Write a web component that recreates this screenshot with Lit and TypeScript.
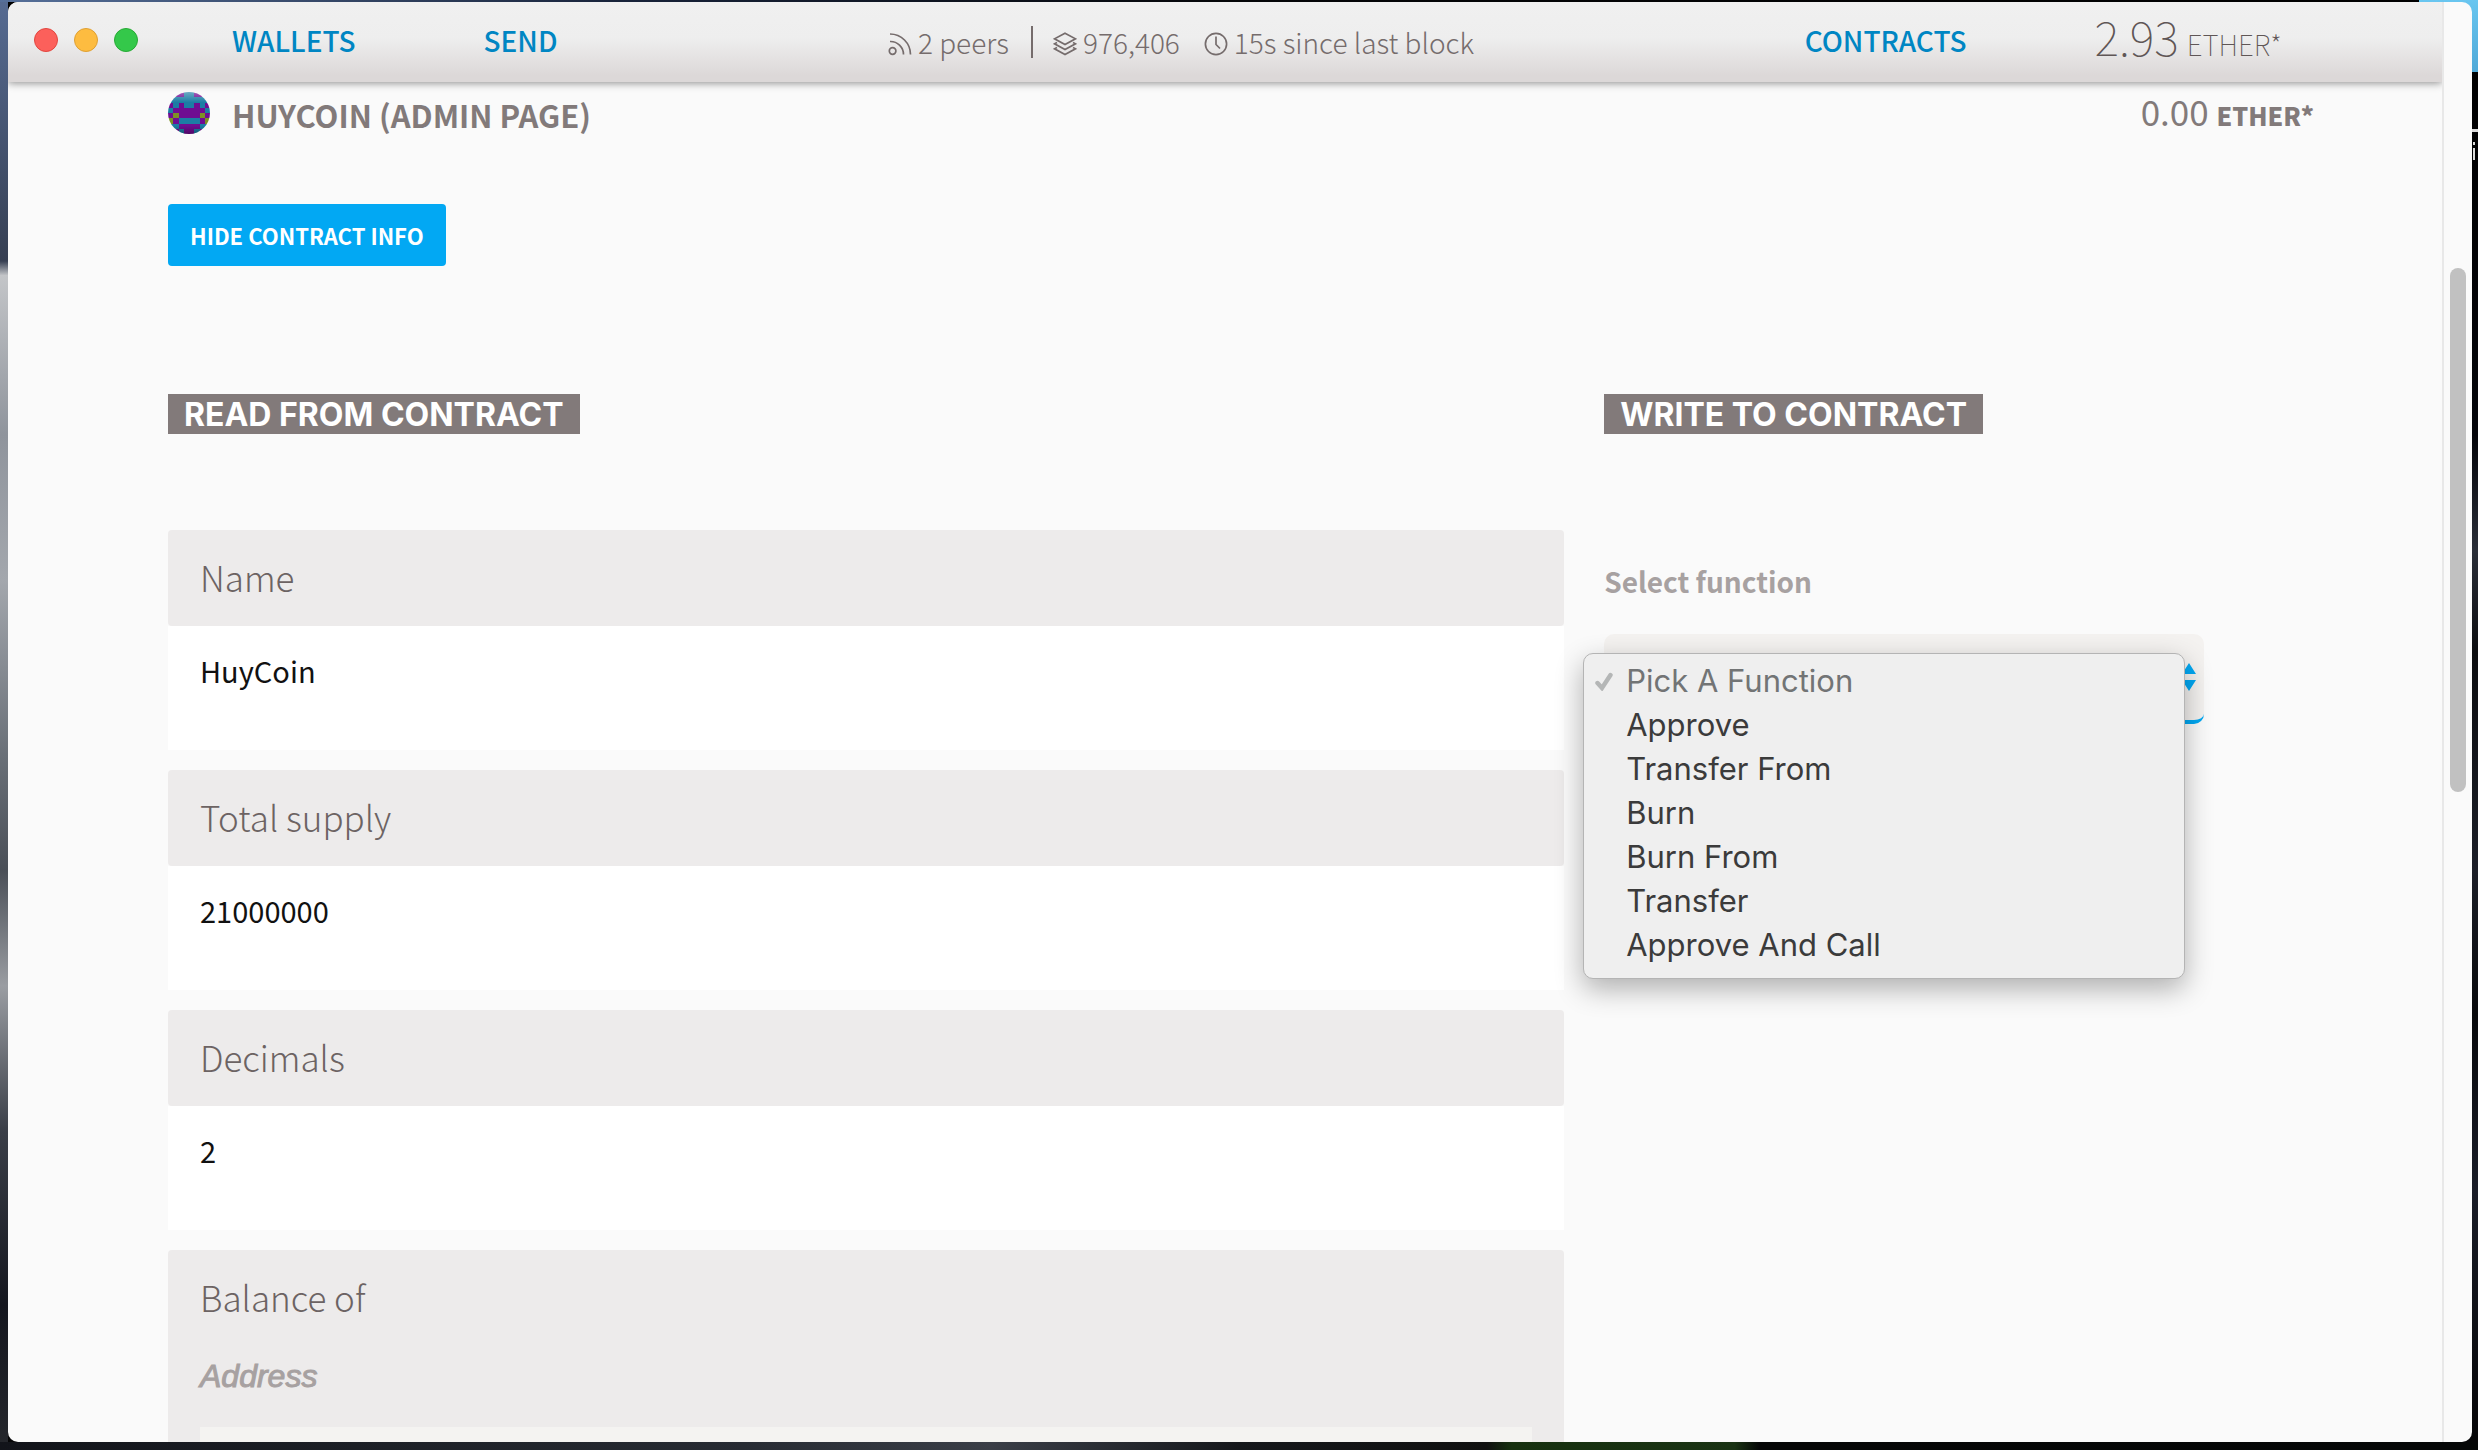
import { LitElement, html, css, svg } from "lit";
import { customElement } from "lit/decorators.js";

const identicon = [
  "01100110",
  "00000000",
  "10100101",
  "01111110",
  "12111121",
  "21000012",
  "00111100",
  "01011010",
];
const identiconColors = ["#1c7da4", "#6f0d92", "#7d9124"];

const fields = [
  { label: "Name", value: "HuyCoin" },
  { label: "Total supply", value: "21000000" },
  { label: "Decimals", value: "2" },
];

const functions = [
  "Pick A Function",
  "Approve",
  "Transfer From",
  "Burn",
  "Burn From",
  "Transfer",
  "Approve And Call",
];

@customElement("app-root")
export class AppRoot extends LitElement {
  static styles = css`
    :host {
      display: block;
      position: relative;
      box-sizing: border-box;
      height: 100vh;
      padding: 2px 6px 8px 8px;
      overflow: hidden;
      font-family: "Noto Sans CJK JP", "Noto Sans", sans-serif;
      color: #827a7a;
      background:
        linear-gradient(#69c6f0, #4fa9d8) right top / 59px 72px no-repeat,
        linear-gradient(90deg, #12141a 0%, #272b33 30%, #3a3e47 40%, #15171b 50%, #101010 60%, #16300f 61%, #1a3314 70%, #050606 71%, #050707 100%) left bottom / 100% 8px no-repeat,
        linear-gradient(90deg, #56709a 0%, #18233a 25%, #050608 50%, #000 100%) left top / 100% 2px no-repeat,
        linear-gradient(#566b92 0%, #363f52 18%, #c3c5c8 19%, #8f949c 30%, #a3a7ad 40%, #6a7078 52%, #4a4f57 60%, #9a9da2 68%, #3a3e47 78%, #15171f 90%, #25272c 100%) left top / 8px 100% no-repeat,
        linear-gradient(#000 0%, #04050a 30%, #2a2e38 38%, #0c0d10 45%, #1c1f28 60%, #08090c 70%, #1a1d28 82%, #050506 100%);
    }
    * {
      box-sizing: border-box;
    }
    h1,
    h2,
    h3,
    p,
    ul,
    dl,
    dd {
      margin: 0;
      padding: 0;
    }
    .window {
      display: flex;
      height: 100%;
      overflow: hidden;
      border-radius: 10px;
      background: #fafafa;
    }
    .page {
      flex: 1;
      min-width: 0;
      display: flex;
      flex-direction: column;
      overflow: hidden;
    }
    .scrollbar {
      flex: none;
      width: 30px;
      padding: 266px 6px 0;
      border-left: 2px solid #e8e8e8;
    }
    .thumb {
      width: 16px;
      height: 524px;
      border-radius: 8px;
      background: #c1c1c1;
    }
    .header {
      flex: none;
      display: flex;
      align-items: center;
      height: 80px;
      padding: 0 160px 0 26px;
      background: linear-gradient(#f0f0f0 0%, #eeeeee 45%, #dcd8d8 92%);
      box-shadow: 0 1px 8px rgba(0, 0, 0, 0.45);
      white-space: nowrap;
    }
    .lights {
      display: flex;
      gap: 16px;
      margin-right: 94px;
      padding-bottom: 4px;
    }
    .light {
      width: 24px;
      height: 24px;
      padding: 0;
      border: 1px solid #e2463f;
      border-radius: 50%;
      background: #fc605b;
    }
    .light.min {
      border-color: #dfa033;
      background: #fdbc40;
    }
    .light.max {
      border-color: #27aa35;
      background: #34c84a;
    }
    .nav {
      display: flex;
      gap: 128px;
      align-items: center;
      padding-bottom: 5px;
    }
    .link {
      font-size: 28px;
      line-height: 40px;
      font-weight: 500;
      color: #0086c3;
      text-decoration: none;
    }
    .status {
      flex: 1;
      display: flex;
      justify-content: center;
      align-items: center;
      font-size: 28px;
      line-height: 40px;
      font-weight: 300;
      color: #756c6c;
    }
    .icon {
      flex: none;
      width: 24px;
      height: 24px;
      margin: 4px 6px 0 0;
      fill: none;
      stroke: #756c6c;
      stroke-width: 1.7;
    }
    .peers {
      margin-right: 20px;
      padding-right: 22px;
      border-right: 2px solid #756c6c;
      line-height: 32px;
    }
    .stat {
      display: flex;
      align-items: center;
    }
    .block {
      margin-right: 24px;
    }
    .total {
      font-size: 28px;
      line-height: 40px;
      font-weight: 100;
      color: #5f5656;
    }
    .total .amount {
      font-size: 47px;
      margin-right: 8px;
    }
    .content {
      padding: 10px 126px 0 160px;
    }
    .title {
      display: flex;
      align-items: center;
      height: 42px;
    }
    .avatar {
      width: 42px;
      height: 42px;
      margin-right: 22px;
      border-radius: 50%;
    }
    .name {
      flex: 1;
      padding-top: 4px;
      font-size: 31px;
      line-height: 48px;
      font-weight: 700;
    }
    .ether {
      margin-right: 2px;
      font-size: 35px;
      line-height: 48px;
    }
    .ether .unit {
      font-size: 25px;
      font-weight: 900;
    }
    .hide {
      display: block;
      height: 62px;
      margin-top: 70px;
      padding: 0 22px;
      border: 0;
      border-radius: 4px;
      background: #02a8f3;
      color: #fff;
      font-family: inherit;
      font-size: 22px;
      font-weight: 700;
    }
    .columns {
      display: grid;
      grid-template-columns: 65% minmax(0, 1fr);
      gap: 40px;
      margin-top: 128px;
    }
    .tag {
      width: max-content;
      height: 40px;
      padding: 1px 16px 0;
      background: #827a7a;
      color: #fff;
      font-family: Inter, sans-serif;
      font-size: 32px;
      line-height: 40px;
      font-weight: 700;
    }
    .cards {
      margin-top: 96px;
    }
    .card {
      margin-bottom: 20px;
    }
    .label {
      height: 96px;
      padding: 0 32px;
      border-radius: 4px;
      background: #edebeb;
      color: #6c6363;
      font-size: 35px;
      line-height: 94px;
      font-weight: 300;
    }
    .value {
      height: 124px;
      padding: 22px 32px;
      background: #fff;
      color: #111;
      font-size: 29px;
      line-height: 44px;
    }
    .form {
      padding: 0 32px 32px;
      border-radius: 4px;
      background: #edebeb;
    }
    .form .label {
      padding: 0;
    }
    .address {
      display: block;
      padding: 10px 0 31px;
      color: #a7a1a1;
      font-family: "Liberation Sans", sans-serif;
      font-size: 32px;
      line-height: 40px;
      font-style: italic;
      -webkit-text-stroke: 1px #a7a1a1;
    }
    .input {
      display: block;
      width: 100%;
      height: 90px;
      border: 0;
      background: #f4f3f1;
      font-size: 29px;
    }
    .select-label {
      display: block;
      margin-top: 125px;
      color: #a7a1a1;
      font-size: 28px;
      line-height: 44px;
      font-weight: 700;
    }
    .picker {
      position: relative;
      max-width: 600px;
      margin-top: 31px;
    }
    .select {
      display: block;
      width: 100%;
      height: 90px;
      padding: 0 32px;
      appearance: none;
      border: 0;
      border-bottom: 4px solid #02a8f3;
      border-radius: 10px;
      background: #f4f2f0;
      color: #6c6363;
      font-family: inherit;
      font-size: 29px;
    }
    .arrows {
      position: absolute;
      top: 29px;
      right: 8px;
      width: 14px;
      height: 28px;
      fill: #02a8f3;
    }
    .menu {
      position: absolute;
      top: 19px;
      left: -21px;
      width: calc(100% + 2px);
      padding: 5px 0 11px;
      border: 1px solid #b4b4b4;
      border-radius: 10px;
      background: #efefef;
      box-shadow: 0 10px 28px rgba(0, 0, 0, 0.3);
      list-style: none;
    }
    .option {
      display: flex;
      align-items: center;
      height: 44px;
      padding-left: 10px;
      color: #3b3b3b;
      font-family: Inter, sans-serif;
      font-size: 31px;
      line-height: 44px;
    }
    .option.picked {
      color: #727475;
    }
    .check {
      flex: none;
      width: 20px;
      height: 20px;
      margin-right: 12px;
      fill: none;
      stroke: #b4b6b6;
      stroke-width: 4.4;
      stroke-linecap: round;
    }
    .desktop {
      position: absolute;
      top: 120px;
      right: 0;
      width: 6px;
      height: 50px;
      fill: #dcdcdc;
    }
  `;

  render() {
    return html`
      <svg class="desktop" viewBox="0 0 6 50" aria-hidden="true">
        <rect x="0" y="9" width="6" height="3" />
        <rect x="1" y="22" width="2" height="3" />
        <rect x="1" y="28" width="2" height="12" />
      </svg>
      <div class="window">
        <div class="page">
          <header class="header">
            <div class="lights">
              <button class="light" aria-label="Close"></button>
              <button class="light min" aria-label="Minimize"></button>
              <button class="light max" aria-label="Zoom"></button>
            </div>
            <nav class="nav">
              <a class="link" href="#wallets">WALLETS</a>
              <a class="link" href="#send">SEND</a>
            </nav>
            <div class="status">
              <span class="stat peers">
                <svg class="icon" viewBox="0 0 24 24">
                  <circle cx="4.6" cy="19" r="3.3" />
                  <path d="M2 9.5A13 13 0 0 1 15.5 22.5M2 2A20.5 20.5 0 0 1 22.5 22.5" />
                </svg>
                2 peers
              </span>
              <span class="stat block">
                <svg class="icon" viewBox="0 0 24 24">
                  <path
                    d="M12 1.2L22.5 6.8L12 12.6L1.5 6.8ZM4 10.4L1.5 11.8L12 17.6L22.5 11.8L20 10.4M4 15.4L1.5 16.8L12 22.6L22.5 16.8L20 15.4"
                  />
                </svg>
                976,406
              </span>
              <span class="stat">
                <svg class="icon" viewBox="0 0 24 24">
                  <circle cx="12" cy="12" r="10.6" />
                  <path d="M12 4.5V12.5L16 16.5" />
                </svg>
                15s since last block
              </span>
            </div>
            <nav class="nav">
              <a class="link" href="#contracts">CONTRACTS</a>
              <span class="total"><span class="amount">2.93</span>ETHER*</span>
            </nav>
          </header>
          <main class="content">
            <div class="title">
              <svg class="avatar" viewBox="0 0 8 8" shape-rendering="crispEdges" aria-hidden="true">
                <defs>
                  <linearGradient id="gloss" x1="0" y1="0" x2="0" y2="1">
                    <stop offset="0" stop-color="#fff" stop-opacity="0.35" />
                    <stop offset="0.25" stop-color="#fff" stop-opacity="0" />
                    <stop offset="0.8" stop-color="#000" stop-opacity="0" />
                    <stop offset="1" stop-color="#000" stop-opacity="0.3" />
                  </linearGradient>
                </defs>
                ${identicon.map((row, y) =>
                  [...row].map(
                    (c, x) => svg`<rect x=${x} y=${y} width="1" height="1" fill=${identiconColors[Number(c)]} />`
                  )
                )}
                <rect width="8" height="8" fill="url(#gloss)" />
              </svg>
              <h1 class="name">HUYCOIN (ADMIN PAGE)</h1>
              <span class="ether">0.00 <span class="unit">ETHER*</span></span>
            </div>
            <button class="hide">HIDE CONTRACT INFO</button>
            <div class="columns">
              <section>
                <h2 class="tag">READ FROM CONTRACT</h2>
                <div class="cards">
                  ${fields.map(
                    (f) => html`<dl class="card">
                      <dt class="label">${f.label}</dt>
                      <dd class="value">${f.value}</dd>
                    </dl>`
                  )}
                  <div class="form">
                    <h3 class="label">Balance of</h3>
                    <label class="address" for="address">Address</label>
                    <input class="input" id="address" />
                  </div>
                </div>
              </section>
              <section>
                <h2 class="tag">WRITE TO CONTRACT</h2>
                <label class="select-label" for="function">Select function</label>
                <div class="picker">
                  <select class="select" id="function">
                    ${functions.map((f) => html`<option>${f}</option>`)}
                  </select>
                  <svg class="arrows" viewBox="0 0 14 28" aria-hidden="true">
                    <path d="M0 11L7 0L14 11ZM0 17L7 28L14 17Z" />
                  </svg>
                  <ul class="menu" role="listbox" aria-label="Select function">
                    ${functions.map(
                      (f, i) => html`<li class="option ${i === 0 ? "picked" : ""}" role="option" aria-selected=${i === 0}>
                        <svg class="check" viewBox="0 0 20 20">
                          ${i === 0 ? svg`<path d="M3.5 12L8 17L16.5 4" />` : ""}
                        </svg>
                        ${f}
                      </li>`
                    )}
                  </ul>
                </div>
              </section>
            </div>
          </main>
        </div>
        <div class="scrollbar"><div class="thumb"></div></div>
      </div>
    `;
  }
}
